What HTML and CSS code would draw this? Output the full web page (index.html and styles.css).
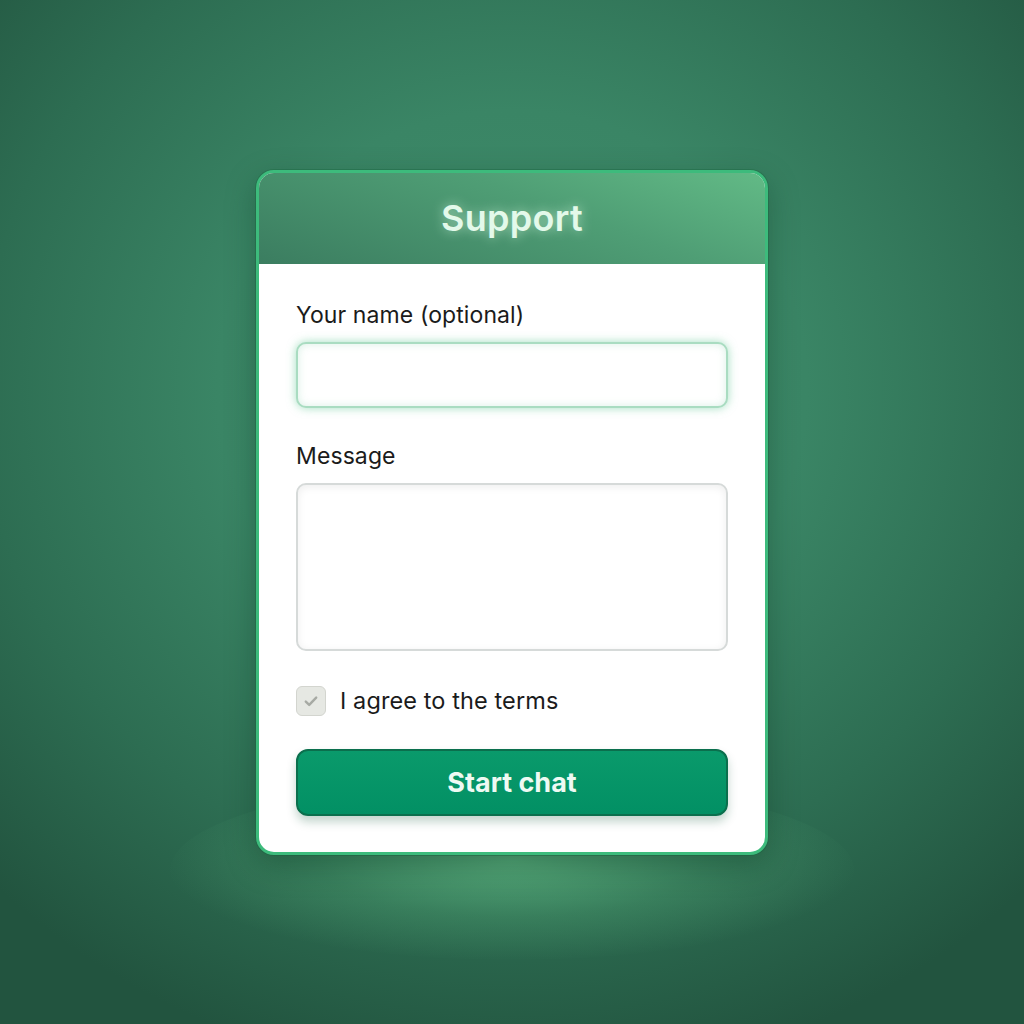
FILE: index.html
```html
<!DOCTYPE html>
<html lang="en">
<head>
<meta charset="UTF-8">
<meta name="viewport" content="width=device-width, initial-scale=1.0">
<title>Support</title>
<link rel="stylesheet" href="styles.css">
</head>
<body>

<div class="stage">
  <!-- soft light under the card -->
  <div class="floor-glow"></div>

  <form class="support-card">
    <div class="support-header">
      <h1>Support</h1>
    </div>

    <div class="support-body">
      <label class="field-label" for="name">Your name (optional)</label>
      <input id="name" class="text-input focused" type="text">

      <label class="field-label" for="msg">Message</label>
      <textarea id="msg" class="text-area"></textarea>

      <label class="check-row">
        <span class="check-box">
          <svg width="18" height="18" viewBox="0 0 18 18"><path d="M3.8 9.6l3.4 3.3L14.2 5.6" fill="none" stroke="#a7aaa4" stroke-width="2.4" stroke-linecap="round" stroke-linejoin="round"/></svg>
        </span>
        <span class="check-text">I agree to the terms</span>
      </label>

      <button class="start-btn" type="button">Start chat</button>
    </div>
  </form>
</div>

</body>
</html>
```

FILE: styles.css
```css
/* page + background */
html, body {
  margin: 0;
  height: 100%;
}

body {
  font-family: Inter, "Noto Sans", "Liberation Sans", sans-serif;
  background: radial-gradient(ellipse 72% 68% at 50% 38%, #3f8d6b 0%, #3a8565 40%, #2d6d52 72%, #22543f 100%);
}

.stage {
  position: relative;
  height: 1024px;
  display: flex;
  align-items: center;
  justify-content: center;
}

.floor-glow {
  position: absolute;
  left: 170px;
  top: 780px;
  width: 684px;
  height: 180px;
  border-radius: 50%;
  background: radial-gradient(ellipse at 50% 45%, rgba(110, 205, 145, 0.6) 0%, rgba(90, 180, 125, 0.28) 40%, rgba(60, 140, 100, 0) 72%);
}

/* card */
.support-card {
  position: relative;
  width: 512px;
  box-sizing: border-box;
  border: 3px solid #3dbb7c;
  border-radius: 18px;
  background: #fff;
  overflow: hidden;
  box-shadow: 0 10px 30px rgba(10, 50, 30, 0.35), 0 0 0 1px rgba(30, 110, 70, 0.45);
}

.support-header {
  height: 91px;
  display: flex;
  align-items: center;
  justify-content: center;
  background: linear-gradient(200deg, #62ba86 0%, #4f9e75 40%, #3b7d60 100%);
}

.support-header h1 {
  margin: 0;
  font-size: 36px;
  font-weight: 600;
  color: #e3f9ea;
  letter-spacing: 0.3px;
  text-shadow: 0 0 12px rgba(220, 255, 230, 0.6);
}

.support-body {
  display: flex;
  flex-direction: column;
  padding: 38px 37px 36px;
}

.field-label {
  font-size: 23px;
  line-height: 26px;
  color: #1b1b1b;
  margin-bottom: 14px;
  letter-spacing: 0.1px;
}

.text-input,
.text-area {
  box-sizing: border-box;
  width: 100%;
  border-radius: 10px;
  font: inherit;
  background: #fff;
  outline: none;
}

.text-input {
  height: 66px;
  border: 2px solid #a9dcc1;
  margin-bottom: 35px;
}

.text-input.focused {
  box-shadow: 0 0 10px rgba(100, 200, 150, 0.6), inset 0 0 9px rgba(120, 200, 160, 0.28);
}

.text-area {
  height: 168px;
  border: 2px solid #d6dad9;
  resize: none;
  box-shadow: inset 0 2px 8px rgba(0, 0, 0, 0.07);
  margin-bottom: 35px;
}

/* checkbox row */
.check-row {
  display: flex;
  align-items: center;
  gap: 14px;
  margin-bottom: 33px;
}

.check-box {
  width: 30px;
  height: 30px;
  box-sizing: border-box;
  border: 1.5px solid #d3d5cf;
  border-radius: 6px;
  background: #e6e8e3;
  display: flex;
  align-items: center;
  justify-content: center;
}

.check-text {
  font-size: 23.5px;
  color: #1b1b1b;
  letter-spacing: 0.1px;
}

/* button */
.start-btn {
  height: 67px;
  border: 2px solid #0b6f4d;
  border-radius: 12px;
  background: linear-gradient(180deg, #0a9a6b 0%, #029064 100%);
  color: #eefaf3;
  font-family: inherit;
  font-size: 27px;
  font-weight: 700;
  box-shadow: 0 6px 10px rgba(20, 90, 60, 0.25);
  cursor: pointer;
}
```
